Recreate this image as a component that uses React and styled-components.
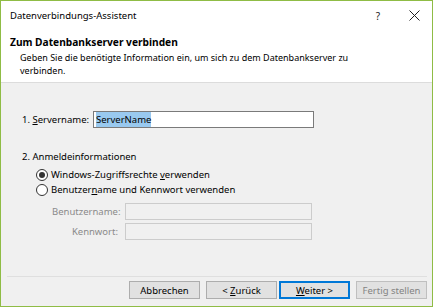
import React from "react";
import styled, { createGlobalStyle } from "styled-components";

const GlobalStyle = createGlobalStyle`
    html, body {
        margin: 0;
        padding: 0;
        background: #ffffff;
    }
    body {
        font-family: "Noto Sans", "DejaVu Sans", sans-serif;
        font-size: 9.5px;
        color: #000;
    }
`;

const Window = styled.div`
    box-sizing: border-box;
    width: 433px;
    height: 307px;
    border: 1px solid #8fbc45;
    background: #f0f0f0;
    display: flex;
    flex-direction: column;
`;

const TitleBar = styled.div`
    height: 29px;
    background: #fff;
    display: flex;
    align-items: center;
    padding-left: 9px;
`;

const Title = styled.div`
    flex: 1;
`;

const TitleButton = styled.div`
    width: 36px;
    height: 29px;
    display: flex;
    align-items: center;
    justify-content: center;
    font-size: 10px;
    color: #222;
`;

const Header = styled.div`
    background: #fff;
    padding: 4px 9px 5px;
    border-bottom: 1px solid #dcdcdc;
`;

const Heading = styled.div`
    font-weight: bold;
    font-size: 10.2px;
    line-height: 16px;
    margin-bottom: 1px;
`;

const Description = styled.div`
    padding-left: 10px;
    line-height: 13px;
    font-size: 9px;
    width: 340px;
`;

const Content = styled.div`
    flex: 1;
    padding: 28px 0 0 21px;
    display: flex;
    flex-direction: column;
`;

const FieldRow = styled.div`
    display: flex;
    align-items: center;
    height: 17px;
    margin-top: ${(p) => p.$mt || 0}px;
    padding-left: ${(p) => p.$indent || 0}px;
`;

const Label = styled.div`
    width: ${(p) => p.$w}px;
    text-align: ${(p) => (p.$right ? "right" : "left")};
    color: ${(p) => (p.$disabled ? "#8a8a8a" : "#000")};
    margin-right: ${(p) => p.$gap || 0}px;
`;

const TextBox = styled.div`
    box-sizing: border-box;
    width: ${(p) => p.$w}px;
    height: 17px;
    border: 1px solid ${(p) => (p.$disabled ? "#cccccc" : "#7a7a7a")};
    background: ${(p) => (p.$disabled ? "#f0f0f0" : "#fff")};
    display: flex;
    align-items: center;
    padding-left: 2px;
`;

const Selected = styled.span`
    background: #99c9ef;
    padding: 1px 0;
    line-height: 13px;
`;

const SectionTitle = styled.div`
    margin-top: 22px;
    line-height: 13px;
`;

const RadioRow = styled.label`
    display: flex;
    align-items: center;
    height: 15px;
    padding-left: 14px;
    margin-top: ${(p) => p.$mt || 0}px;
`;

const RadioCircle = styled.span`
    box-sizing: border-box;
    width: 12px;
    height: 12px;
    border-radius: 50%;
    border: 1px solid #333;
    background: #fff;
    margin-right: 3px;
    display: flex;
    align-items: center;
    justify-content: center;
    &::after {
        content: "";
        width: 6px;
        height: 6px;
        border-radius: 50%;
        background: ${(p) => (p.$checked ? "#333" : "transparent")};
    }
`;

const Footer = styled.div`
    margin: 0 5px 0 6px;
    border-top: 1px solid #dfdfdf;
    padding: 4px 0 7px;
    display: flex;
    justify-content: flex-end;
`;

const Button = styled.div`
    box-sizing: border-box;
    width: 71px;
    height: 18px;
    background: #e1e1e1;
    border: ${(p) => (p.$default ? "2px" : "1px")} solid;
    border-color: ${(p) => (p.$disabled ? "#bfbfbf" : p.$default ? "#0078d7" : "#adadad")};
    color: ${(p) => (p.$disabled ? "#838383" : "#000")};
    display: flex;
    align-items: center;
    justify-content: center;
    white-space: pre;
    margin-left: ${(p) => p.$ml || 0}px;
`;

export default function App() {
    return (
        <>
            <GlobalStyle />
            <Window>
                <TitleBar>
                    <Title>Datenverbindungs-Assistent</Title>
                    <TitleButton>?</TitleButton>
                    <TitleButton>
                        <svg width="11" height="11" viewBox="0 0 11 11">
                            <path d="M0.5 0.5 L10.5 10.5 M10.5 0.5 L0.5 10.5" stroke="#222" strokeWidth="1" />
                        </svg>
                    </TitleButton>
                </TitleBar>
                <Header>
                    <Heading>Zum Datenbankserver verbinden</Heading>
                    <Description>
                        Geben Sie die benötigte Information ein, um sich zu dem Datenbankserver zu verbinden.
                    </Description>
                </Header>
                <Content>
                    <FieldRow>
                        <Label $w={71}>
                            1. <u>S</u>ervername:
                        </Label>
                        <TextBox $w={221}>
                            <Selected>ServerName</Selected>
                        </TextBox>
                    </FieldRow>
                    <SectionTitle>2. Anmeldeinformationen</SectionTitle>
                    <RadioRow $mt={4}>
                        <RadioCircle $checked />
                        <span>
                            Windows-Zugriffsrechte <u>v</u>erwenden
                        </span>
                    </RadioRow>
                    <RadioRow>
                        <RadioCircle />
                        <span>
                            Benutzer<u>n</u>ame und Kennwort verwenden
                        </span>
                    </RadioRow>
                    <FieldRow $mt={6} $indent={30}>
                        <Label $w={66} $right $gap={7} $disabled>
                            Benutzername:
                        </Label>
                        <TextBox $w={187} $disabled />
                    </FieldRow>
                    <FieldRow $mt={3} $indent={30}>
                        <Label $w={66} $right $gap={7} $disabled>
                            Kennwort:
                        </Label>
                        <TextBox $w={187} $disabled />
                    </FieldRow>
                </Content>
                <Footer>
                    <Button>Abbrechen</Button>
                    <Button $ml={6}>
                        <span>
                            &lt; <u>Z</u>urück
                        </span>
                    </Button>
                    <Button $default $ml={2}>
                        <span>
                            <u>W</u>eiter &gt;
                        </span>
                    </Button>
                    <Button $disabled $ml={6}>
                        Fertig stellen
                    </Button>
                </Footer>
            </Window>
        </>
    );
}
